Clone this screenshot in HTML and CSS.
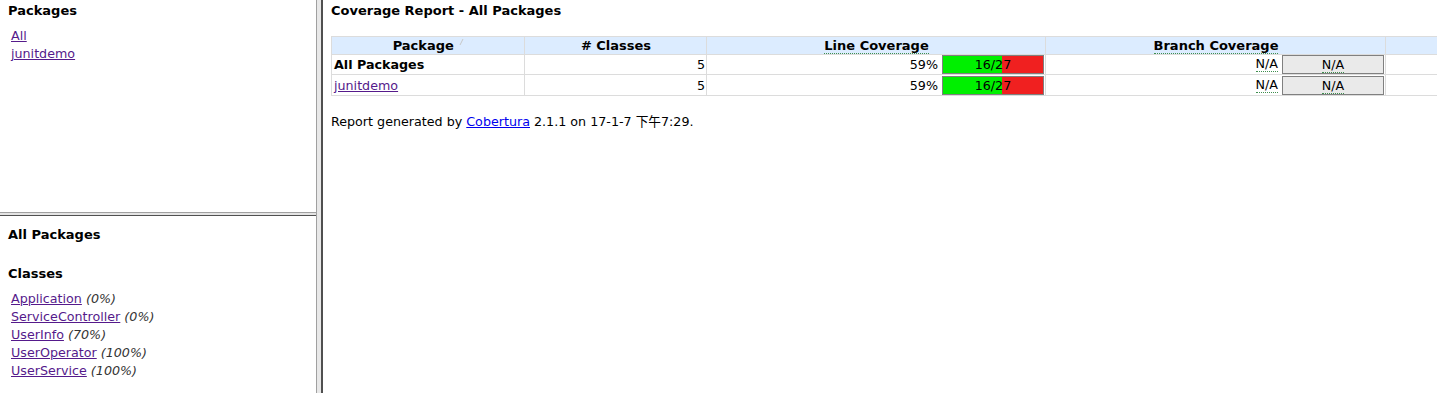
FILE: index.html
```html
<!DOCTYPE html>
<html>
<head>
<meta charset="utf-8">
<title>Coverage Report</title>
<link rel="stylesheet" href="styles.css">
</head>
<body>
<div class="frameset">
  <div class="left">
    <div class="pane pane-top">
      <h5 class="title">Packages</h5>
      <ul class="links">
        <li><a href="#">All</a></li>
        <li><a href="#">junitdemo</a></li>
      </ul>
    </div>
    <div class="hdivider"></div>
    <div class="pane pane-bottom">
      <h5 class="title">All Packages</h5>
      <h5 class="title title-classes">Classes</h5>
      <ul class="links">
        <li><a href="#">Application</a> <i>(0%)</i></li>
        <li><a href="#">ServiceController</a> <i>(0%)</i></li>
        <li><a href="#">UserInfo</a> <i>(70%)</i></li>
        <li><a href="#">UserOperator</a> <i>(100%)</i></li>
        <li><a href="#">UserService</a> <i>(100%)</i></li>
      </ul>
    </div>
  </div>
  <div class="vdivider"></div>
  <div class="main">
    <h5 class="title">Coverage Report - All Packages</h5>
    <table class="report">
      <colgroup>
        <col class="c-pkg"><col class="c-cls"><col class="c-line"><col class="c-branch"><col class="c-cx">
      </colgroup>
      <thead>
        <tr>
          <td class="heading">Package <svg class="sort" width="5" height="8" viewBox="0 0 5 8"><path d="M1 7 L4 1" stroke="#c8c8c8" stroke-width="1" fill="none"/></svg></td>
          <td class="heading"># Classes</td>
          <td class="heading"><span class="abbr">Line Coverage</span></td>
          <td class="heading"><span class="abbr">Branch Coverage</span></td>
          <td class="heading"></td>
        </tr>
      </thead>
      <tbody>
        <tr>
          <td><b>All Packages</b></td>
          <td class="value">5</td>
          <td class="value"><div class="cov"><span>59%</span><div class="graph"><div class="green" style="width:59px"></div><span class="gtext">16/27</span></div></div></td>
          <td class="value"><div class="cov"><span class="abbr">N/A</span><div class="graph na"><span class="gtext"><span class="abbr">N/A</span></span></div></div></td>
          <td class="value"></td>
        </tr>
        <tr>
          <td><a href="#">junitdemo</a></td>
          <td class="value">5</td>
          <td class="value"><div class="cov"><span>59%</span><div class="graph"><div class="green" style="width:59px"></div><span class="gtext">16/27</span></div></div></td>
          <td class="value"><div class="cov"><span class="abbr">N/A</span><div class="graph na"><span class="gtext"><span class="abbr">N/A</span></span></div></div></td>
          <td class="value"></td>
        </tr>
      </tbody>
    </table>
    <div class="footer">Report generated by <a class="ext" href="#">Cobertura</a> 2.1.1 on 17-1-7 下午7:29.</div>
  </div>
</div>
</body>
</html>
```

FILE: styles.css
```css
html, body {
  margin: 0;
  padding: 0;
  height: 100%;
  overflow: hidden;
  background: #ffffff;
}

body {
  font-family: "DejaVu Sans", Verdana, "Noto Sans CJK SC", sans-serif;
  font-size: 12.7px;
  color: #000;
}

a {
  color: #551a8b;
  text-decoration: underline;
}

a.ext {
  color: #0000ee;
}

.frameset {
  display: flex;
  height: 393px;
}

.left {
  width: 316px;
  flex: none;
  display: flex;
  flex-direction: column;
}

.pane {
  padding-left: 8px;
}

.pane-top {
  height: 212px;
  padding-top: 3px;
  box-sizing: border-box;
}

.pane-bottom {
  flex: 1;
  padding-top: 11px;
}

.hdivider {
  flex: none;
  border-top: 1px solid #a0a0a0;
  border-bottom: 1px solid #505050;
  background: #e4e4e4;
  height: 2px;
}

.vdivider {
  width: 4px;
  flex: none;
  border-left: 1px solid #a0a0a0;
  border-right: 2px solid #505050;
  background: #e8e8e8;
}

.title {
  margin: 0;
  font-size: 13px;
  line-height: 16px;
  font-weight: bold;
}

.title-classes {
  margin-top: 23px;
}

.links {
  list-style: none;
  margin: 8px 0 0 0;
  padding: 0 0 0 3px;
}

.links li {
  line-height: 18px;
  white-space: nowrap;
}

.links i {
  color: #333;
}

.main {
  flex: 1;
  min-width: 0;
  padding: 3px 0 0 8px;
  overflow: hidden;
}

table.report {
  border-collapse: collapse;
  table-layout: fixed;
  width: 1250px;
  margin-top: 17px;
}

.c-pkg { width: 193px; }
.c-cls { width: 182px; }
.c-line { width: 339px; }
.c-branch { width: 340px; }
.c-cx { width: 196px; }

table.report td {
  border: 1px solid #dcdcdc;
  font-size: 12.7px;
  padding: 0 1px 0 2px;
  white-space: nowrap;
  height: 19px;
  line-height: 17px;
}

table.report tbody tr:last-child td {
  height: 20px;
}

table.report td.heading {
  background: #dcecff;
  font-weight: bold;
  text-align: center;
  height: 17px;
  line-height: 17px;
  font-size: 13px;
}

table.report td.value {
  text-align: right;
}

.sort {
  vertical-align: 4px;
  margin-left: 1px;
}

.abbr {
  border-bottom: 1px dotted #3f8f4f;
  line-height: 14px;
  display: inline-block;
}

.cov {
  display: flex;
  justify-content: flex-end;
  align-items: center;
  gap: 4px;
}

.graph {
  position: relative;
  width: 100px;
  height: 17px;
  background: #f02020;
  border: 1px solid #808080;
  text-align: center;
}

.graph.na {
  background: #eaeaea;
}

.green {
  height: 17px;
  background: #00f000;
}

.gtext {
  position: absolute;
  left: 0;
  top: 0;
  width: 100px;
  line-height: 17px;
  text-align: center;
}

.footer {
  margin-top: 18px;
  line-height: 16px;
}
```
